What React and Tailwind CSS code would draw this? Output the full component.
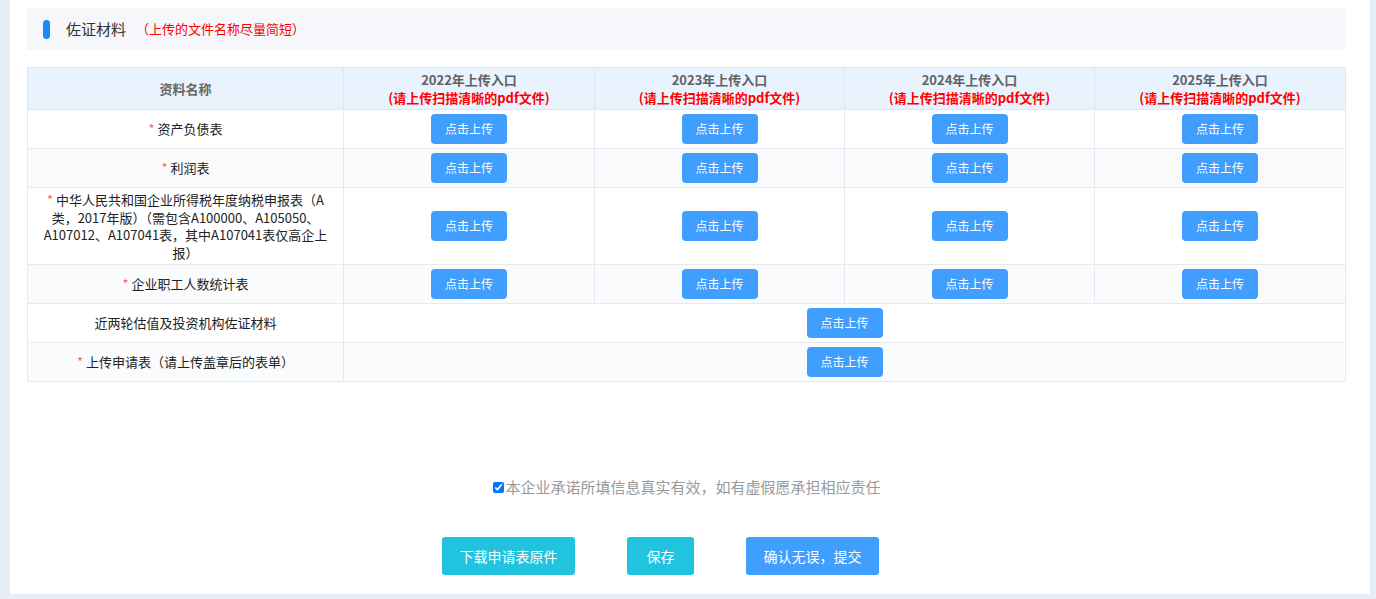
import React from "react";

const font = { fontFamily: '"Microsoft YaHei", "Noto Sans CJK SC", "Noto Sans", sans-serif' };

function UploadBtn() {
  return (
    <button className="w-[76px] h-[30px] rounded-[4px] bg-[#409eff] text-white text-[12px] leading-none">
      点击上传
    </button>
  );
}

function Star() {
  return <span className="text-[#f56c6c] mr-[3px]">*</span>;
}

const rows = [
  { label: "资产负债表", req: true, h: "h-[39px]" },
  { label: "利润表", req: true, h: "h-[39px]" },
  {
    label:
      "中华人民共和国企业所得税年度纳税申报表（A类，2017年版）（需包含A100000、A105050、A107012、A107041表，其中A107041表仅高企上报）",
    req: true,
    h: "h-[77px]",
  },
  { label: "企业职工人数统计表", req: true, h: "h-[39px]" },
];

const years = ["2022", "2023", "2024", "2025"];

export default function App() {
  return (
    <div className="w-[1376px] h-[599px] bg-[#e6edf5] overflow-hidden" style={font}>
      <div className="ml-[10px] w-[1360px] h-[594px] bg-white pl-[17px] pr-[25px] pt-[8px]">
        <div className="h-[42px] bg-[#f5f7fa] flex items-center pl-[16px]">
          <span className="w-[7px] h-[19px] rounded-full bg-[#1989fa]"></span>
          <span className="ml-[16px] text-[15px] text-[#333]">佐证材料</span>
          <span className="ml-[10px] text-[13px] text-[#f00]">（上传的文件名称尽量简短）</span>
        </div>

        <table className="mt-[17px] w-[1318px] border-collapse table-fixed text-[13px] text-[#222]">
          <colgroup>
            <col className="w-[316px]" />
            <col className="w-[251px]" />
            <col className="w-[250px]" />
            <col className="w-[250px]" />
            <col className="w-[251px]" />
          </colgroup>
          <thead>
            <tr className="h-[42px] bg-[#e9f3fd]">
              <th className="border border-[#dfe6ec] text-[#666] font-bold text-[13px]">资料名称</th>
              {years.map((y) => (
                <th key={y} className="border border-[#dfe6ec] font-bold text-[13px] leading-[18px]">
                  <div className="text-[#606266]">{y}年上传入口</div>
                  <div className="text-[#f00]">(请上传扫描清晰的pdf文件)</div>
                </th>
              ))}
            </tr>
          </thead>
          <tbody>
            {rows.map((r, i) => (
              <tr key={i} className={`${r.h} ${i % 2 === 1 ? "bg-[#fafbfd]" : "bg-white"}`}>
                <td className="border border-[#e5eaf0] text-center px-[8px] leading-[17.5px]">
                  {r.req && <Star />}
                  {r.label}
                </td>
                {years.map((y) => (
                  <td key={y} className="border border-[#e5eaf0] text-center align-middle">
                    <div className="flex justify-center">
                      <UploadBtn />
                    </div>
                  </td>
                ))}
              </tr>
            ))}
            <tr className="h-[39px] bg-white">
              <td className="border border-[#e5eaf0] text-center">近两轮估值及投资机构佐证材料</td>
              <td colSpan={4} className="border border-[#e5eaf0]">
                <div className="flex justify-center">
                  <UploadBtn />
                </div>
              </td>
            </tr>
            <tr className="h-[39px] bg-[#fafbfd]">
              <td className="border border-[#e5eaf0] text-center">
                <Star />
                上传申请表（请上传盖章后的表单）
              </td>
              <td colSpan={4} className="border border-[#e5eaf0]">
                <div className="flex justify-center">
                  <UploadBtn />
                </div>
              </td>
            </tr>
          </tbody>
        </table>

        <div className="mt-[95px] flex justify-center items-center pl-[2px]">
          <label className="flex items-center text-[15px] leading-[20px] text-[#999]">
            <input type="checkbox" defaultChecked className="w-[11px] h-[11px] m-0 mr-[1px] accent-[#0075ff]" />
            本企业承诺所填信息真实有效，如有虚假愿承担相应责任
          </label>
        </div>

        <div className="mt-[40px] flex pl-[415px] gap-[52px]">
          <button className="w-[133px] h-[38px] rounded-[3px] bg-[#22c3de] text-white text-[14px]">下载申请表原件</button>
          <button className="w-[67px] h-[38px] rounded-[3px] bg-[#22c3de] text-white text-[14px]">保存</button>
          <button className="w-[133px] h-[38px] rounded-[3px] bg-[#409eff] text-white text-[14px]">确认无误，提交</button>
        </div>
      </div>
    </div>
  );
}
